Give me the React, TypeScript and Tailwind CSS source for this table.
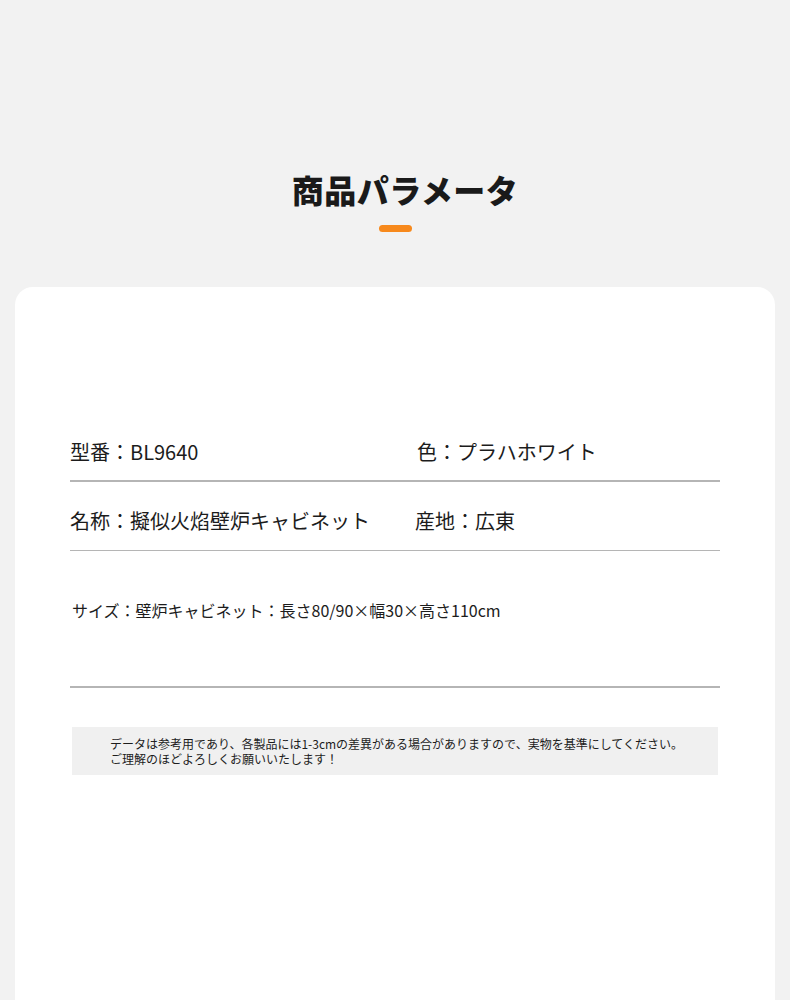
const font = {
  fontFamily: '"Noto Sans CJK JP", "Noto Sans", sans-serif',
};

const App = () => {
  return (
    <div className="h-[1000px] bg-[#f2f2f2] overflow-hidden" style={font}>
      <div className="flex flex-col items-center pt-[165px]">
        <h1 className="pl-[20px] text-[32px] leading-[48px] font-black text-[#1a1a1a] tracking-[0.5px]">
          商品パラメータ
        </h1>
        <div className="mt-[12px] h-[7px] w-[33px] rounded-full bg-[#f7891c]" />
      </div>

      <div className="mx-[15px] mt-[55px] h-[713px] rounded-t-[18px] bg-white px-[55px] pt-[150px]">
        <div className="pb-[13px] grid grid-cols-[347px_1fr] text-[20px] leading-[30px] text-[#1c1c1c]">
          <span>型番：BL9640</span>
          <span>色：プラハホワイト</span>
        </div>
        <div className="h-[1.5px] bg-[#b5b5b5]" />
        <div className="pt-[24px] pb-[14px] grid grid-cols-[345px_1fr] text-[20px] leading-[30px] text-[#1c1c1c]">
          <span>名称：擬似火焰壁炉キャビネット</span>
          <span>産地：広東</span>
        </div>
        <div className="h-[1.5px] bg-[#b5b5b5]" />
        <div className="pt-[47px] pb-[64px] pl-[2px] text-[16px] leading-[24px] text-[#1c1c1c]">
          サイズ：壁炉キャビネット：長さ80/90×幅30×高さ110cm
        </div>
        <div className="h-[1.5px] bg-[#b5b5b5]" />
        <div className="mt-[39px] mx-[2px] bg-[#f0f0f0] py-[9px] pl-[38px] text-[12px] leading-[15px] text-[#1c1c1c]">
          <p>データは参考用であり、各製品には1-3cmの差異がある場合がありますので、実物を基準にしてください。</p>
          <p>ご理解のほどよろしくお願いいたします！</p>
        </div>
      </div>
    </div>
  );
};

export default App;
